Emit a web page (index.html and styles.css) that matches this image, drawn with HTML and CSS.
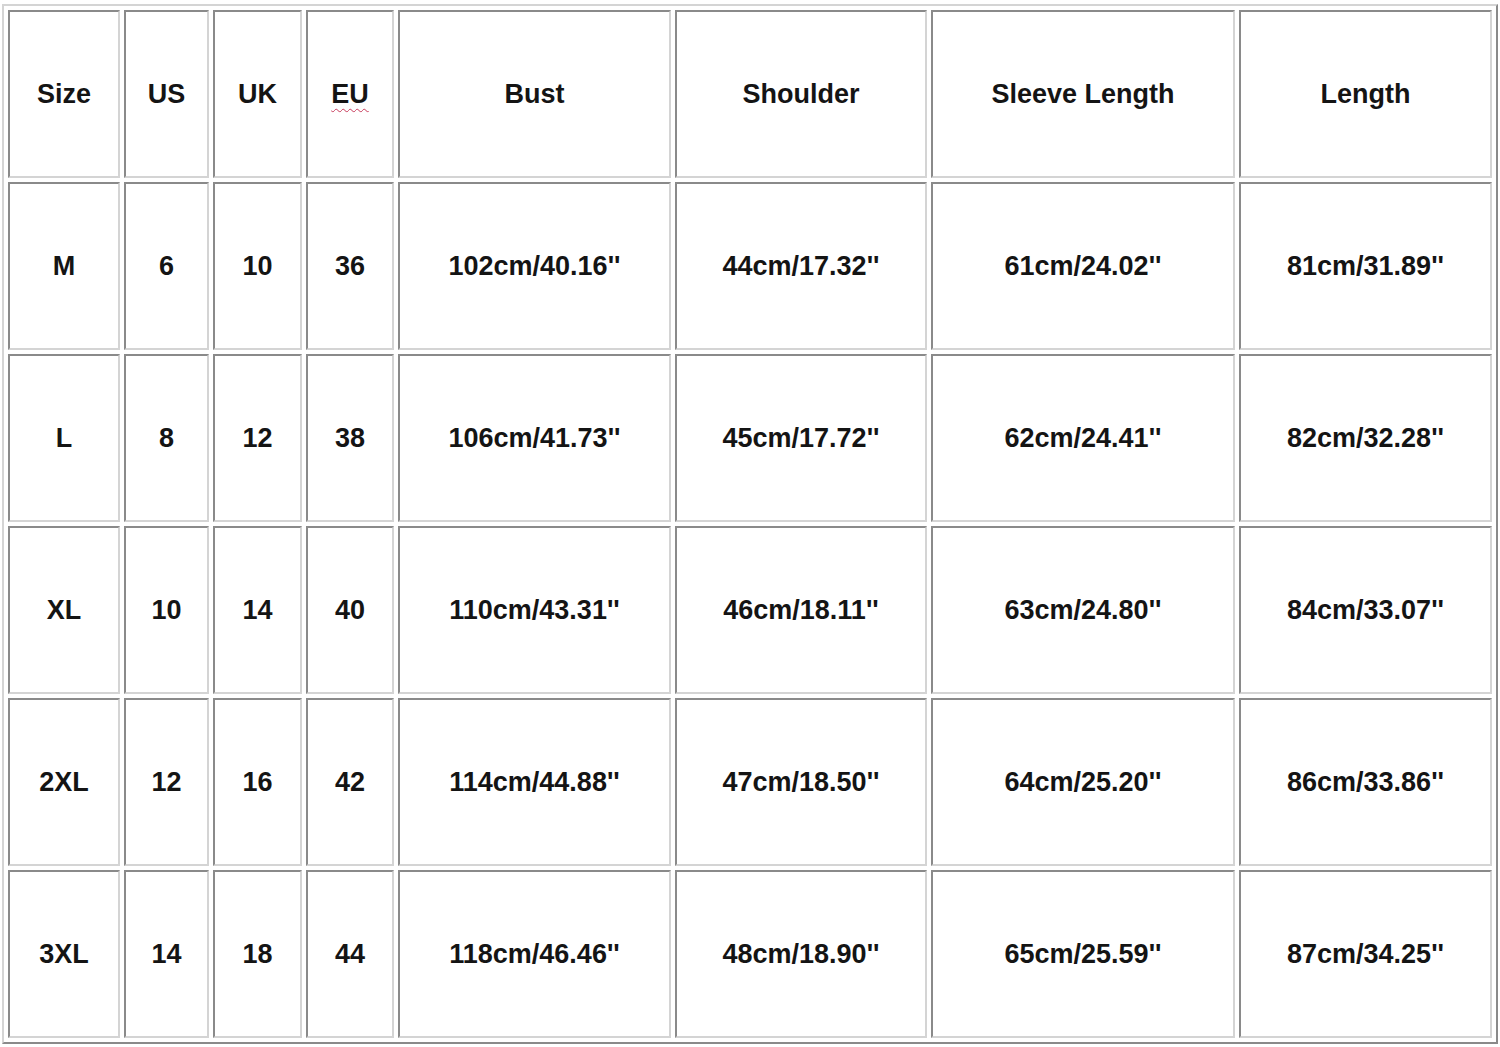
FILE: index.html
```html
<!DOCTYPE html>
<html lang="en">
<head>
<meta charset="utf-8">
<title>Size Chart</title>
<link rel="stylesheet" href="styles.css">
</head>
<body>
<table class="chart">
  <colgroup>
    <col class="c-size"><col class="c-us"><col class="c-uk"><col class="c-eu">
    <col class="c-bust"><col class="c-shoulder"><col class="c-sleeve"><col class="c-length">
  </colgroup>
  <tbody>
    <tr><td>Size</td><td>US</td><td>UK</td><td><span class="spell">EU</span></td><td>Bust</td><td>Shoulder</td><td>Sleeve Length</td><td>Length</td></tr>
    <tr><td>M</td><td>6</td><td>10</td><td>36</td><td>102cm/40.16''</td><td>44cm/17.32''</td><td>61cm/24.02''</td><td>81cm/31.89''</td></tr>
    <tr><td>L</td><td>8</td><td>12</td><td>38</td><td>106cm/41.73''</td><td>45cm/17.72''</td><td>62cm/24.41''</td><td>82cm/32.28''</td></tr>
    <tr><td>XL</td><td>10</td><td>14</td><td>40</td><td>110cm/43.31''</td><td>46cm/18.11''</td><td>63cm/24.80''</td><td>84cm/33.07''</td></tr>
    <tr><td>2XL</td><td>12</td><td>16</td><td>42</td><td>114cm/44.88''</td><td>47cm/18.50''</td><td>64cm/25.20''</td><td>86cm/33.86''</td></tr>
    <tr><td>3XL</td><td>14</td><td>18</td><td>44</td><td>118cm/46.46''</td><td>48cm/18.90''</td><td>65cm/25.59''</td><td>87cm/34.25''</td></tr>
  </tbody>
</table>
</body>
</html>
```

FILE: styles.css
```css
html, body {
  background: #ffffff;
}
body {
  margin: 4px 0 0 2px;
}
.chart {
  table-layout: fixed;
  border-collapse: separate;
  border-spacing: 4px;
  border-style: solid;
  border-width: 2px;
  border-color: #d4d4d4 #8a8a8a #8a8a8a #d4d4d4;
  font-family: "Liberation Sans", Arial, sans-serif;
  font-weight: bold;
  font-size: 27px;
  color: #141414;
  width: 1496px;
}
.c-size { width: 112px; }
.c-us { width: 85px; }
.c-uk { width: 89px; }
.c-eu { width: 88px; }
.c-bust { width: 273px; }
.c-shoulder { width: 252px; }
.c-sleeve { width: 304px; }
.c-length { width: 253px; }
.chart td {
  box-sizing: border-box;
  height: 168px;
  padding: 0;
  text-align: center;
  vertical-align: middle;
  border-style: solid;
  border-width: 2px;
  border-color: #8a8a8a #d4d4d4 #d4d4d4 #8a8a8a;
  white-space: nowrap;
}
.spell {
  text-decoration: underline wavy #c83a5a;
  text-decoration-thickness: 1px;
  text-underline-offset: 5px;
}
```
